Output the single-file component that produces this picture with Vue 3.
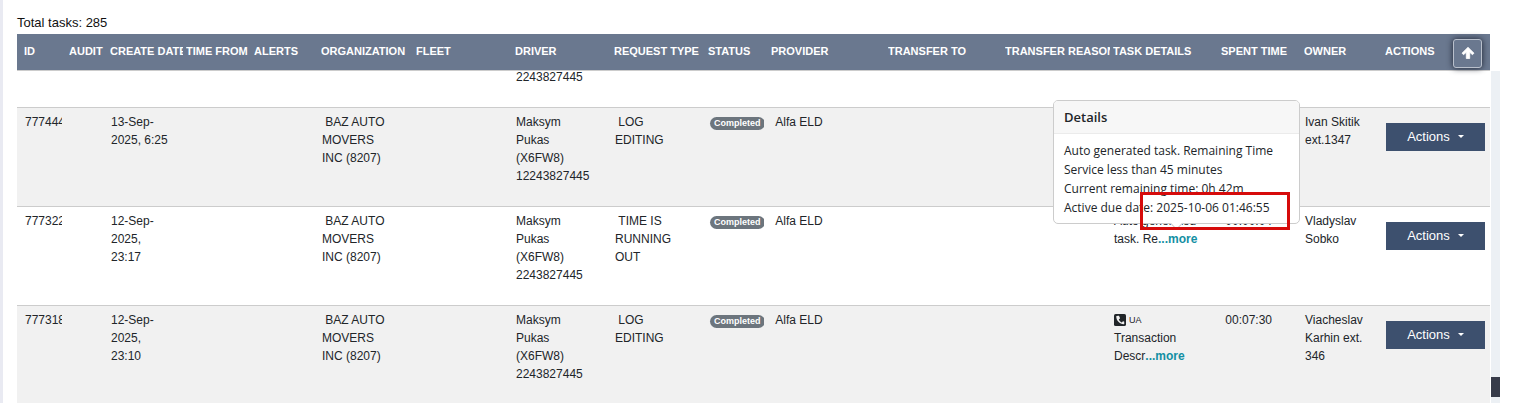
<script setup>
const columns = [
  { title: 'ID', width: 45 },
  { title: 'AUDIT', width: 41 },
  { title: 'CREATE DATE', width: 76 },
  { title: 'TIME FROM', width: 68 },
  { title: 'ALERTS', width: 67 },
  { title: 'ORGANIZATION', width: 95 },
  { title: 'FLEET', width: 99 },
  { title: 'DRIVER', width: 99 },
  { title: 'REQUEST TYPE', width: 94 },
  { title: 'STATUS', width: 63 },
  { title: 'PROVIDER', width: 117 },
  { title: 'TRANSFER TO', width: 117 },
  { title: 'TRANSFER REASON', width: 108 },
  { title: 'TASK DETAILS', width: 108 },
  { title: 'SPENT TIME', width: 83 },
  { title: 'OWNER', width: 81 },
  { title: 'ACTIONS', width: 112 },
]

const tasks = [
  {
    id: '777444', created: ['13-Sep-', '2025, 6:25'], phone: '12243827445',
    request: ['LOG', 'EDITING'], owner: ['Ivan Skitik', 'ext.1347'],
  },
  {
    id: '777322', created: ['12-Sep-', '2025,', '23:17'], phone: '2243827445',
    request: ['TIME IS', 'RUNNING', 'OUT'], owner: ['Vladyslav', 'Sobko'],
    details: ['Auto generated', 'task. Re'], spent: '00:00:04', open: true,
  },
  {
    id: '777318', created: ['12-Sep-', '2025,', '23:10'], phone: '2243827445',
    request: ['LOG', 'EDITING'], owner: ['Viacheslav', 'Karhin ext.', '346'],
    call: 'UA', details: ['Transaction', 'Descr'], spent: '00:07:30',
  },
]
</script>

<template>
  <main class="page">
    <p class="total">Total tasks: 285</p>
    <div class="board">
      <div class="table-wrap">
        <table class="tasks">
          <colgroup>
            <col v-for="c in columns" :key="c.title" :style="{ width: c.width + 'px' }" />
          </colgroup>
          <thead>
            <tr>
              <th v-for="c in columns" :key="c.title" scope="col"><div class="clip">{{ c.title }}</div></th>
            </tr>
          </thead>
          <tbody>
            <tr class="partial">
              <td colspan="7"></td>
              <td>2243827445</td>
              <td colspan="9"></td>
            </tr>
            <tr v-for="(t, i) in tasks" :key="t.id" :class="{ shaded: i % 2 === 0 }">
              <td>{{ t.id }}</td>
              <td></td>
              <td><div v-for="l in t.created" :key="l">{{ l }}</div></td>
              <td></td>
              <td></td>
              <td>&nbsp;BAZ AUTO<br />MOVERS<br />INC (8207)</td>
              <td></td>
              <td>Maksym<br />Pukas<br />(X6FW8)<br />{{ t.phone }}</td>
              <td>
                <div v-for="(l, n) in t.request" :key="l"><template v-if="n === 0">&nbsp;</template>{{ l }}</div>
              </td>
              <td class="status"><span class="badge">Completed</span></td>
              <td>&nbsp;Alfa ELD</td>
              <td></td>
              <td></td>
              <td class="details">
                <div v-if="t.call" class="call">
                  <svg viewBox="0 0 448 448" aria-hidden="true">
                    <rect width="448" height="448" rx="60" fill="#212529" />
                    <path fill="#f1f1f1" d="M95 79l75-17c8-2 16 2 20 10l34 80c3 8 1 15-5 20l-41 35c24 50 64 90 114 114l35-41c5-6 13-8 20-5l35 15v82l-21 13C213 385 84 245 85 97c0-8 3-16 10-18z" />
                  </svg>
                  <small>{{ t.call }}</small>
                </div>
                <template v-if="t.details">
                  <div>{{ t.details[0] }}</div>
                  <div>{{ t.details[1] }}<a href="#" class="more">...more</a></div>
                </template>
                <div v-if="t.open" class="popover" role="tooltip">
                  <h3>Details</h3>
                  <div class="popover-body">
                    Auto generated task. Remaining Time<br />
                    Service less than 45 minutes<br />
                    Current remaining time: 0h 42m<br />
                    Active due date: 2025-10-06 01:46:55
                  </div>
                  <span class="arrow"></span>
                  <span class="highlight"></span>
                </div>
              </td>
              <td>&nbsp;{{ t.spent }}</td>
              <td><div v-for="l in t.owner" :key="l">{{ l }}</div></td>
              <td class="action-cell">
                <button type="button" class="actions">Actions<span class="caret"></span></button>
              </td>
            </tr>
          </tbody>
        </table>
        <button type="button" class="to-top" aria-label="Scroll to top">
          <svg viewBox="0 0 14 14" aria-hidden="true">
            <path d="M7 1.300L13 7.200 11.500 8.700 8.700 6.300V12.500H5.300V6.300L2.500 8.700 1 7.200z" fill="#fff" stroke="#fff" stroke-width=".8" stroke-linejoin="round" />
          </svg>
        </button>
      </div>
      <div class="track"><div class="thumb"></div></div>
    </div>
  </main>
</template>

<style>
body {
  background: #fff;
}
</style>

<style scoped>
.page {
  box-sizing: border-box;
  display: flex;
  flex-direction: column;
  height: 100vh;
  overflow: hidden;
  padding: 14px 22px 0 14px;
  border-left: 3px solid #e9eaf2;
  color: #212529;
  font-family: "Liberation Sans", Arial, sans-serif;
  font-size: 12px;
  line-height: 18px;
}
.total {
  margin: 0 0 2px;
  color: #111;
  font-size: 13px;
}
.board {
  display: flex;
  flex: 1;
  gap: 1px;
  min-height: 0;
}
.table-wrap {
  position: relative;
  flex: 1;
  min-width: 0;
}
.tasks {
  width: 100%;
  table-layout: fixed;
  border-spacing: 0;
}
th {
  box-sizing: border-box;
  height: 36px;
  padding: 0 0 2px 7px;
  background: #6a788f;
  color: #fff;
  font-size: 11px;
  font-weight: bold;
  text-align: left;
  white-space: nowrap;
}
.clip {
  margin-right: -4px;
  overflow: hidden;
}
td {
  box-sizing: border-box;
  height: 99px;
  padding: 5px 0 21px 8px;
  overflow: hidden;
  border-top: 1px solid #ccc;
  vertical-align: top;
  white-space: nowrap;
}
.shaded td {
  background: #f1f1f1;
}
.partial td {
  height: 37px;
  padding: 0 0 24px 8px;
  line-height: 12px;
}
td.status {
  padding-left: 9px;
}
.badge {
  display: inline-block;
  padding: 0 4px;
  border-radius: 7px;
  background: #6c757d;
  color: #fff;
  font-size: 9px;
  font-weight: bold;
  line-height: 13px;
}
.details {
  position: relative;
  overflow: visible;
}
.call {
  display: flex;
  align-items: center;
  gap: 3px;
}
.call svg {
  width: 12px;
  height: 12px;
}
.call small {
  font-size: 9px;
}
.more {
  color: #138fa3;
  font-weight: bold;
  text-decoration: none;
}
.popover {
  position: absolute;
  top: -107px;
  left: -53px;
  z-index: 2;
  box-sizing: border-box;
  width: 247px;
  border: 1px solid #ccc;
  border-radius: 5px;
  background: #fff;
  font-family: "Open Sans", "Noto Sans", sans-serif;
  font-size: 12px;
  line-height: 19px;
}
.popover h3 {
  margin: 0;
  padding: 7px 10px 6px;
  border-bottom: 1px solid #ebebeb;
  border-radius: 4px 4px 0 0;
  background: #f7f7f7;
  font-size: 13px;
  font-weight: 600;
  line-height: 19px;
}
.popover-body {
  padding: 7px 10px 6px;
}
.arrow {
  position: absolute;
  bottom: -5px;
  left: 118px;
  width: 8px;
  height: 8px;
  border: solid #ccc;
  border-width: 0 1px 1px 0;
  background: #fff;
  transform: rotate(45deg);
}
.highlight {
  position: absolute;
  right: 9px;
  bottom: -7px;
  box-sizing: border-box;
  width: 150px;
  height: 38px;
  border: 3px solid #d60b0b;
}
.action-cell {
  padding-right: 5px;
}
.actions {
  display: flex;
  align-items: center;
  justify-content: center;
  gap: 8px;
  width: 100%;
  height: 28px;
  margin-top: 10px;
  padding: 0 0 2px;
  border: 0;
  background: #3d506e;
  color: #fff;
  font-family: inherit;
  font-size: 13px;
}
.caret {
  border: solid transparent;
  border-width: 3px 3px 0;
  border-top-color: #fff;
}
.to-top {
  position: absolute;
  top: 5px;
  right: 8px;
  display: grid;
  place-items: center;
  width: 29px;
  height: 29px;
  padding: 0 0 2px;
  border: 1px solid #b9c0cc;
  border-radius: 3px;
  background: #6a788f;
  box-shadow: 0 0 6px #1b2130;
}
.to-top svg {
  width: 14px;
  height: 14px;
}
.track {
  display: flex;
  flex-direction: column;
  justify-content: flex-end;
  box-sizing: border-box;
  width: 9px;
  margin-top: 37px;
  padding-bottom: 6px;
  background: #ecf0f4;
}
.thumb {
  height: 20px;
  background: #373c4a;
}
</style>
